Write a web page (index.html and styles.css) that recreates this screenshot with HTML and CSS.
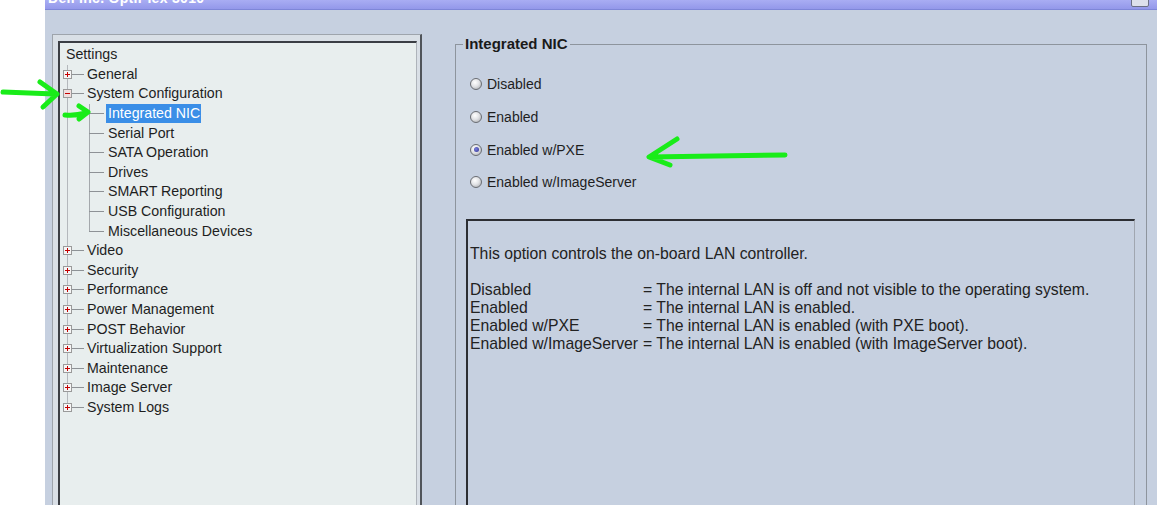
FILE: index.html
```html
<!DOCTYPE html>
<html>
<head>
<meta charset="utf-8">
<link rel="stylesheet" href="styles.css">
</head>
<body>
<div class="screen">
  <div class="gutter"></div>
  <div class="window">
    <div class="titlebar">
      <span class="title">Dell Inc. OptiPlex 3010</span>
      <span class="closebtn"></span>
    </div>
    <div class="content">
      <div class="treeframe">
        <div class="tree">
          <div class="row root-row"><span class="label">Settings</span></div>
          <div class="row top">
            <svg class="exp" viewBox="0 0 9 9"><rect x=".5" y=".5" width="8" height="8" fill="#f6f6f6" stroke="#9a9a9a"/><path d="M2 4.5h5M4.5 2v5" stroke="#c40000"/></svg>
            <span class="hline"></span><span class="label">General</span>
          </div>
          <div class="row top">
            <svg class="exp" viewBox="0 0 9 9"><rect x=".5" y=".5" width="8" height="8" fill="#f0dede" stroke="#9a9a9a"/><path d="M2 4.5h5" stroke="#c40000"/></svg>
            <span class="hline"></span><span class="label">System Configuration</span>
          </div>
          <div class="row child"><span class="chline"></span><span class="label selected">Integrated NIC</span></div>
          <div class="row child"><span class="chline"></span><span class="label">Serial Port</span></div>
          <div class="row child"><span class="chline"></span><span class="label">SATA Operation</span></div>
          <div class="row child"><span class="chline"></span><span class="label">Drives</span></div>
          <div class="row child"><span class="chline"></span><span class="label">SMART Reporting</span></div>
          <div class="row child"><span class="chline"></span><span class="label">USB Configuration</span></div>
          <div class="row child last-child"><span class="chline"></span><span class="label">Miscellaneous Devices</span></div>
          <div class="row top">
            <svg class="exp" viewBox="0 0 9 9"><rect x=".5" y=".5" width="8" height="8" fill="#f6f6f6" stroke="#9a9a9a"/><path d="M2 4.5h5M4.5 2v5" stroke="#c40000"/></svg>
            <span class="hline"></span><span class="label">Video</span>
          </div>
          <div class="row top">
            <svg class="exp" viewBox="0 0 9 9"><rect x=".5" y=".5" width="8" height="8" fill="#f6f6f6" stroke="#9a9a9a"/><path d="M2 4.5h5M4.5 2v5" stroke="#c40000"/></svg>
            <span class="hline"></span><span class="label">Security</span>
          </div>
          <div class="row top">
            <svg class="exp" viewBox="0 0 9 9"><rect x=".5" y=".5" width="8" height="8" fill="#f6f6f6" stroke="#9a9a9a"/><path d="M2 4.5h5M4.5 2v5" stroke="#c40000"/></svg>
            <span class="hline"></span><span class="label">Performance</span>
          </div>
          <div class="row top">
            <svg class="exp" viewBox="0 0 9 9"><rect x=".5" y=".5" width="8" height="8" fill="#f6f6f6" stroke="#9a9a9a"/><path d="M2 4.5h5M4.5 2v5" stroke="#c40000"/></svg>
            <span class="hline"></span><span class="label">Power Management</span>
          </div>
          <div class="row top">
            <svg class="exp" viewBox="0 0 9 9"><rect x=".5" y=".5" width="8" height="8" fill="#f6f6f6" stroke="#9a9a9a"/><path d="M2 4.5h5M4.5 2v5" stroke="#c40000"/></svg>
            <span class="hline"></span><span class="label">POST Behavior</span>
          </div>
          <div class="row top">
            <svg class="exp" viewBox="0 0 9 9"><rect x=".5" y=".5" width="8" height="8" fill="#f6f6f6" stroke="#9a9a9a"/><path d="M2 4.5h5M4.5 2v5" stroke="#c40000"/></svg>
            <span class="hline"></span><span class="label">Virtualization Support</span>
          </div>
          <div class="row top">
            <svg class="exp" viewBox="0 0 9 9"><rect x=".5" y=".5" width="8" height="8" fill="#f6f6f6" stroke="#9a9a9a"/><path d="M2 4.5h5M4.5 2v5" stroke="#c40000"/></svg>
            <span class="hline"></span><span class="label">Maintenance</span>
          </div>
          <div class="row top">
            <svg class="exp" viewBox="0 0 9 9"><rect x=".5" y=".5" width="8" height="8" fill="#f6f6f6" stroke="#9a9a9a"/><path d="M2 4.5h5M4.5 2v5" stroke="#c40000"/></svg>
            <span class="hline"></span><span class="label">Image Server</span>
          </div>
          <div class="row top last-top">
            <svg class="exp" viewBox="0 0 9 9"><rect x=".5" y=".5" width="8" height="8" fill="#f6f6f6" stroke="#9a9a9a"/><path d="M2 4.5h5M4.5 2v5" stroke="#c40000"/></svg>
            <span class="hline"></span><span class="label">System Logs</span>
          </div>
        </div>
      </div>

      <fieldset class="group">
        <legend class="legend">Integrated NIC</legend>
        <div class="radios">
          <div class="radio-row"><span class="radio"></span><span>Disabled</span></div>
          <div class="radio-row"><span class="radio"></span><span>Enabled</span></div>
          <div class="radio-row"><span class="radio checked"></span><span>Enabled w/PXE</span></div>
          <div class="radio-row"><span class="radio"></span><span>Enabled w/ImageServer</span></div>
        </div>
        <div class="desc">
          <div class="desc-intro">This option controls the on-board LAN controller.</div>
          <div class="desc-table">
            <span>Disabled</span><span>= The internal LAN is off and not visible to the operating system.</span>
            <span>Enabled</span><span>= The internal LAN is enabled.</span>
            <span>Enabled w/PXE</span><span>= The internal LAN is enabled (with PXE boot).</span>
            <span>Enabled w/ImageServer</span><span>= The internal LAN is enabled (with ImageServer boot).</span>
          </div>
        </div>
      </fieldset>
    </div>
  </div>

  <svg class="arrows" viewBox="0 0 1157 505" width="1157" height="505">
    <g fill="none" stroke="#19ec19" stroke-width="5" stroke-linecap="round" stroke-linejoin="round">
      <path d="M3 92 L55 94 M40 82 L57 94 L43 107"/>
      <path d="M65 115 Q75 116 86 113 M79 106 L88 112 L79 119"/>
      <path d="M785 155 L649 157 M677 139 L649 157 L670 165"/>
    </g>
  </svg>
</div>
</body>
</html>
```

FILE: styles.css
```css
html, body {
  margin: 0;
  padding: 0;
  background: #ffffff;
}

.screen {
  position: relative;
  display: flex;
  width: 1157px;
  height: 505px;
  overflow: hidden;
  font-family: "Liberation Sans", Arial, sans-serif;
  color: #1e1e1e;
}

.gutter {
  width: 45px;
  flex: none;
  background: #ffffff;
}

.window {
  flex: 1;
  display: flex;
  flex-direction: column;
  background: #c6d0e0;
  min-width: 0;
}

.titlebar {
  height: 9px;
  flex: none;
  display: flex;
  align-items: flex-start;
  overflow: hidden;
  background: linear-gradient(#a9adf3, #9398ea);
  border-bottom: 1px solid #7e86d8;
  padding-left: 3px;
}

.title {
  margin-top: -9px;
  font-size: 14px;
  line-height: 14px;
  font-weight: bold;
  color: #ffffff;
  letter-spacing: 0.3px;
}

.closebtn {
  margin-left: auto;
  margin-right: 8px;
  margin-top: -2px;
  width: 16px;
  height: 7px;
  border: 1px solid #6b6f86;
  border-radius: 2px;
  background: #dde0ec;
}

.content {
  flex: 1;
  display: flex;
  align-items: flex-start;
  padding-right: 10px;
}

/* Tree */
.treeframe {
  flex: none;
  width: 359px;
  height: 520px;
  margin-left: 7px;
  margin-top: 24px;
  padding: 6px 3px 0 5px;
  background: #d9dfe6;
  border-top: 1px solid #9ea4ac;
  border-left: 1px solid #9ea4ac;
  border-right: 2px solid #50545a;
}

.tree {
  height: 100%;
  box-sizing: border-box;
  background: #e8eeee;
  border-top: 2px solid #3b3e44;
  border-left: 2px solid #3b3e44;
  border-right: 1px solid #aeb3ba;
  padding-top: 2px;
  font-size: 14.2px;
}

.row {
  height: 19.6px;
  display: flex;
  align-items: center;
  white-space: nowrap;
}

.root-row {
  padding-left: 6px;
}

.top {
  padding-left: 3px;
  background: linear-gradient(#b4b8bc, #b4b8bc) no-repeat 7px 0 / 1px 100%;
}

.last-top {
  background: linear-gradient(#b4b8bc, #b4b8bc) no-repeat 7px 0 / 1px 50%;
}

.child {
  padding-left: 29px;
  background:
    linear-gradient(#b4b8bc, #b4b8bc) no-repeat 7px 0 / 1px 100%,
    linear-gradient(#a4a8ac, #a4a8ac) no-repeat 29px 0 / 1px 100%;
}

.last-child {
  background:
    linear-gradient(#b4b8bc, #b4b8bc) no-repeat 7px 0 / 1px 100%,
    linear-gradient(#a4a8ac, #a4a8ac) no-repeat 29px 0 / 1px 50%;
}

.exp {
  width: 9px;
  height: 9px;
  flex: none;
  display: block;
}

.hline {
  width: 12px;
  height: 1px;
  background: #8e9296;
  margin-right: 3px;
  flex: none;
}

.chline {
  width: 15px;
  height: 1px;
  background: #8e9296;
  margin-right: 2px;
  flex: none;
}

.label {
  line-height: 19px;
  padding: 0 1px 0 2px;
}

.root-row .label,
.top .label {
  padding: 0;
}

.selected {
  background: #3a8ee7;
  color: #ffffff;
}

/* Right group */
.group {
  flex: 1;
  margin: 25px 0 0 33px;
  padding: 0;
  height: 520px;
  border: 1px solid #8d949d;
  min-width: 0;
}

.legend {
  margin-left: 7px;
  padding: 0 2px;
  font-size: 15px;
  line-height: 18px;
  font-weight: bold;
  color: #1a1a1a;
}

.radios {
  padding: 15px 0 0 14px;
}

.radio-row {
  height: 32.7px;
  display: flex;
  align-items: center;
  gap: 5px;
  font-size: 14px;
}

.radio {
  width: 10px;
  height: 10px;
  border-radius: 50%;
  border: 1px solid #6a6d73;
  background: radial-gradient(circle at 40% 35%, #ffffff 0%, #e2e3e6 45%, #a0a3a8 100%);
  position: relative;
  flex: none;
}

.radio.checked::after {
  content: "";
  position: absolute;
  left: 2.5px;
  top: 2.5px;
  width: 5px;
  height: 5px;
  border-radius: 50%;
  background: radial-gradient(circle at 40% 40%, #7b80e0, #2b2f8e);
}

.desc {
  margin: 20px 11px 0 10px;
  height: 400px;
  border-top: 2px solid #2c2e33;
  border-left: 2px solid #2c2e33;
  border-right: 1px solid #a0a6b0;
  padding: 24px 0 0 2px;
  font-size: 15.75px;
  line-height: 18px;
  color: #222222;
}

.desc-intro {
  margin-bottom: 18px;
}

.desc-table {
  display: grid;
  grid-template-columns: 173px auto;
  justify-content: start;
  white-space: nowrap;
}

.arrows {
  position: absolute;
  left: 0;
  top: 0;
  pointer-events: none;
}
```
